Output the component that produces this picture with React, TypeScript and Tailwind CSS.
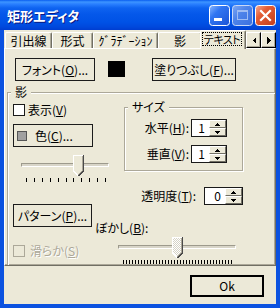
import React from "react";

function Mn({ c }: { c: string }) {
  return <span className="underline underline-offset-[1px]">{c}</span>;
}

function Btn({ cls, children }: { cls: string; children: React.ReactNode }) {
  return (
    <div
      className={`h-[23px] border border-[#1c1c1c] flex items-center text-[12px] leading-none whitespace-nowrap ${cls}`}
    >
      {children}
    </div>
  );
}

function SpinBtn({ up }: { up?: boolean }) {
  return (
    <div className="h-[8px] flex items-center justify-center bg-[#ece9d8] border border-t-white border-l-white border-r-[#716f64] border-b-[#716f64]">
      <svg width="5" height="3" viewBox="0 0 5 3" shapeRendering="crispEdges">
        {up ? <polygon points="2.5,0 5,3 0,3" fill="#000" /> : <polygon points="0,0 5,0 2.5,3" fill="#000" />}
      </svg>
    </div>
  );
}

function Spin({ value, cls }: { value: string; cls: string }) {
  return (
    <div className={`flex h-[18px] border border-[#1a1a1a] bg-white ${cls}`}>
      <div className="flex-1 flex items-center justify-end pr-[4px] text-[12px] leading-none">{value}</div>
      <div className="flex flex-col w-[17px]">
        <SpinBtn up />
        <SpinBtn />
      </div>
    </div>
  );
}

function Thumb({ dither }: { dither?: boolean }) {
  return (
    <svg width="11" height="22" viewBox="0 0 11 22" shapeRendering="crispEdges">
      <defs>
        <pattern id="dith" width="2" height="2" patternUnits="userSpaceOnUse">
          <rect width="2" height="2" fill="#d6d3c6" />
          <rect x="0" y="0" width="1" height="1" fill="#fff" />
          <rect x="1" y="1" width="1" height="1" fill="#fff" />
        </pattern>
      </defs>
      <polygon points="0,0 11,0 11,16 5.5,21.5 0,16" fill={dither ? "url(#dith)" : "#ece9d8"} />
      <polyline points="0.5,16 0.5,0.5 10,0.5" fill="none" stroke="#fff" />
      <line x1="0.5" y1="16" x2="5" y2="20.5" stroke="#fff" />
      <polyline points="9.5,1 9.5,16 5.5,20" fill="none" stroke="#aca899" />
      <polyline points="10.5,0 10.5,16 5.5,21" fill="none" stroke="#4a4a4a" />
    </svg>
  );
}

function Slider({ cls, thumb, ticks, dither }: { cls: string; thumb: number; ticks: number[]; dither?: boolean }) {
  return (
    <div className={`relative h-[28px] ${cls}`}>
      <div className="absolute left-0 right-0 top-[8px] h-[4px] border border-t-[#9d9a8c] border-l-[#9d9a8c] border-b-white border-r-white bg-[#d8d5c8]" />
      <div className="absolute top-0" style={{ left: thumb }}>
        <Thumb dither={dither} />
      </div>
      {ticks.map((t, i) => (
        <div
          key={i}
          className="absolute top-[23px] w-[1px] h-[4px] bg-black"
          style={{ left: t }}
        />
      ))}
    </div>
  );
}

function Check({ disabled }: { disabled?: boolean }) {
  return disabled ? (
    <div className="w-[12px] h-[12px] border border-[#aca899] bg-[#ece9d8]" />
  ) : (
    <div className="w-[12px] h-[12px] border border-[#1a1a1a] bg-white" />
  );
}

function Tab({ cls, children }: { cls: string; children: React.ReactNode }) {
  return (
    <div
      className={`h-[16px] flex items-center justify-center text-[12px] leading-none whitespace-nowrap border-t border-l border-r border-t-white border-l-white border-r-[#716f64] rounded-t-[2px] shadow-[inset_-1px_0_0_#aca899] ${cls}`}
    >
      {children}
    </div>
  );
}

function ArrowBtn({ left }: { left?: boolean }) {
  return (
    <div className="w-[15px] h-[16px] flex items-center justify-center bg-[#ece9d8] border border-t-white border-l-white border-r-[#000] border-b-[#000] shadow-[inset_-1px_-1px_0_#aca899]">
      <svg width="4" height="7" viewBox="0 0 4 7" shapeRendering="crispEdges">
        {left ? <polygon points="4,0 4,7 0.5,3.5" fill="#000" /> : <polygon points="0,0 0,7 3.5,3.5" fill="#000" />}
      </svg>
    </div>
  );
}

export default function App() {
  const ticks1 = Array.from({ length: 11 }, (_, i) => Math.round(5 + i * 7.9));
  const ticks2 = Array.from({ length: 37 }, (_, i) => 5 + i * 3);
  return (
    <div className="w-[280px] h-[308px] flex flex-col overflow-hidden font-['Noto_Sans_CJK_JP',sans-serif] [font-feature-settings:'palt'] text-black">
      {/* Title bar */}
      <div className="h-[30px] flex items-start bg-[linear-gradient(to_bottom,#0a5ef0_0px,#3d95ff_2px,#2a80ff_4px,#0e63f0_8px,#0558ea_14px,#0052e6_22px,#0048dc_27px,#003dd0_30px)]">
        <div className="pl-[7px] pt-[9px] text-[13px] leading-[13px] font-bold text-white whitespace-nowrap [text-shadow:1px_1px_0_#0a1883]">
          矩形エディタ
        </div>
        <div className="ml-auto mt-[5px] mr-[4px] flex gap-[2px]">
          <svg width="21" height="21" viewBox="0 0 21 21">
            <defs>
              <linearGradient id="gb" x1="0" y1="0" x2="1" y2="1">
                <stop offset="0" stopColor="#8ab8ff" />
                <stop offset="0.35" stopColor="#3176f2" />
                <stop offset="1" stopColor="#1a53d6" />
              </linearGradient>
              <linearGradient id="gd" x1="0" y1="0" x2="1" y2="1">
                <stop offset="0" stopColor="#7fa8f4" />
                <stop offset="0.4" stopColor="#4f84ea" />
                <stop offset="1" stopColor="#3a6fdf" />
              </linearGradient>
              <linearGradient id="gr" x1="0" y1="0" x2="1" y2="1">
                <stop offset="0" stopColor="#f6ad95" />
                <stop offset="0.35" stopColor="#e45d36" />
                <stop offset="1" stopColor="#c23d1a" />
              </linearGradient>
            </defs>
            <rect x="0.5" y="0.5" width="20" height="20" rx="3" fill="url(#gb)" stroke="#fff" />
            <rect x="5" y="13" width="8" height="3" fill="#fff" />
          </svg>
          <svg width="21" height="21" viewBox="0 0 21 21">
            <rect x="0.5" y="0.5" width="20" height="20" rx="3" fill="url(#gd)" stroke="#c9d8f7" />
            <rect x="5.5" y="5.5" width="10" height="9" fill="none" stroke="#9fbcf3" />
            <rect x="5" y="5" width="11" height="2" fill="#9fbcf3" />
          </svg>
          <svg width="21" height="21" viewBox="0 0 21 21">
            <rect x="0.5" y="0.5" width="20" height="20" rx="3" fill="url(#gr)" stroke="#fff" />
            <path d="M6 6 L15 15 M15 6 L6 15" stroke="#fff" strokeWidth="2.2" strokeLinecap="square" />
          </svg>
        </div>
      </div>

      {/* Body */}
      <div className="flex-1 flex flex-col bg-[#ece9d8] border-x-4 border-b-4 border-[#0b52e0]">
        {/* Tabs */}
        <div className="relative z-10 h-[18px] flex items-end pl-[1px]">
          <Tab cls="w-[47px]">引出線</Tab>
          <Tab cls="w-[41px]">形式</Tab>
          <Tab cls="w-[65px]">ｸﾞﾗﾃﾞｰｼｮﾝ</Tab>
          <Tab cls="w-[44px]">影</Tab>
          <div className="relative z-10 -ml-[2px] -mb-px h-[19px] w-[46px] bg-[#ece9d8] border-t border-l border-r border-t-white border-l-white border-r-[#716f64] rounded-t-[2px] pt-[1px] px-[1px] shadow-[inset_-1px_0_0_#aca899]">
            <div className="w-[40px] h-[14px] border border-dotted border-black flex items-center justify-center">
              <span className="text-[11px] leading-none whitespace-nowrap tracking-[-0.5px]">テキスト</span>
            </div>
          </div>
          <div className="ml-auto flex">
            <ArrowBtn left />
            <ArrowBtn />
          </div>
        </div>

        {/* Panel */}
        <div className="h-[218px] flex flex-col overflow-hidden border border-t-white border-l-white border-r-[#716f64] border-b-[#716f64] shadow-[inset_-1px_-1px_0_#aca899] pt-[9px]">
          <div className="flex items-start ml-[10px]">
            <Btn cls="w-[80px] justify-center">
              フォント(<Mn c="O" />)...
            </Btn>
            <div className="ml-[13px] mt-[3px] w-[17px] h-[16px] bg-black" />
            <Btn cls="w-[84px] ml-[27px] justify-center">
              塗りつぶし(<Mn c="F" />)...
            </Btn>
          </div>

          {/* 影 group */}
          <div className="relative flex-1 mt-[11px] ml-[2px] border-t border-l border-[#aca899] shadow-[inset_1px_1px_0_#fff] flex flex-col">
            <div className="absolute -top-[8px] left-[3px] px-[4px] bg-[#ece9d8] text-[12px] leading-[14px]">影</div>

            <div className="flex items-start mt-[11px] ml-[5px]">
              {/* left column */}
              <div className="w-[111px] flex flex-col">
                <div className="flex items-center h-[12px]">
                  <Check />
                  <span className="ml-[3px] text-[12px] leading-none whitespace-nowrap">
                    表示(<Mn c="V" />)
                  </span>
                </div>
                <Btn cls="w-[80px] mt-[8px]">
                  <div className="ml-[3px] w-[10px] h-[10px] bg-[#a0a0a0] border border-[#555]" />
                  <span className="ml-[8px]">
                    色(<Mn c="C" />)...
                  </span>
                </Btn>
                <Slider cls="ml-[8px] mt-[8px] w-[88px]" thumb={52} ticks={ticks1} />
              </div>

              {/* サイズ */}
              <div className="relative mt-[3px] w-[119px] h-[64px] border border-[#aca899] shadow-[inset_1px_1px_0_#fff,1px_1px_0_#fff] flex flex-col items-end pt-[11px] pr-[15px]">
                <div className="absolute -top-[8px] left-[3px] px-[4px] bg-[#ece9d8] text-[12px] leading-[14px] whitespace-nowrap">サイズ</div>
                <div className="flex items-center gap-[2px]">
                  <span className="text-[12px] leading-none whitespace-nowrap">
                    水平(<Mn c="H" />):
                  </span>
                  <Spin value="1" cls="w-[36px]" />
                </div>
                <div className="flex items-center gap-[2px] mt-[8px]">
                  <span className="text-[12px] leading-none whitespace-nowrap">
                    垂直(<Mn c="V" />):
                  </span>
                  <Spin value="1" cls="w-[36px]" />
                </div>
              </div>
            </div>

            {/* 透明度 */}
            <div className="flex items-center mt-[4px] ml-[130px]">
              <div className="w-[58px] text-right text-[12px] leading-none whitespace-nowrap">
                透明度(<Mn c="T" />):
              </div>
              <Spin value="0" cls="ml-[8px] w-[39px]" />
            </div>

            {/* パターン / ぼかし */}
            <div className="flex items-start -mt-[1px] ml-[5px]">
              <Btn cls="w-[79px] justify-center">
                パターン(<Mn c="P" />)...
              </Btn>
              <div className="ml-[3px] mt-[17px] text-[12px] leading-[14px] whitespace-nowrap">
                ぼかし(<Mn c="B" />):
              </div>
            </div>

            {/* 滑らか + slider */}
            <div className="flex items-start mt-[2px] ml-[5px]">
              <div className="w-[105px] mt-[8px] flex items-center">
                <Check disabled />
                <span className="ml-[5px] text-[12px] leading-none whitespace-nowrap text-[#aca899] [text-shadow:1px_1px_0_#fff]">
                  滑らか(<Mn c="S" />)
                </span>
              </div>
              <Slider cls="w-[118px]" thumb={54} ticks={ticks2} dither />
            </div>
          </div>
        </div>

        {/* Bottom */}
        <div className="flex-1 flex justify-end items-start pt-[9px] pr-[12px]">
          <div className="w-[74px] h-[22px] border-2 border-black flex items-center justify-center text-[12px] leading-none">
            Ok
          </div>
        </div>
      </div>
    </div>
  );
}
